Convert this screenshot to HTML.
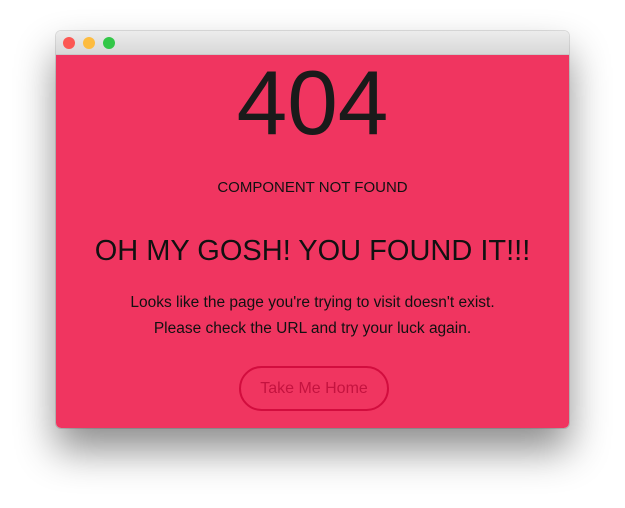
<!DOCTYPE html>
<html><head><style>
body{margin:0;width:625px;height:508px;background:#fff;position:relative;overflow:hidden;font-family:"Liberation Sans",sans-serif}
.win{position:absolute;left:56px;top:31px;width:513px;height:397px;border-radius:5px;overflow:hidden;box-shadow:0 22px 40px rgba(0,0,0,.45),0 0 0 1px rgba(0,0,0,.12)}
.bar{height:23px;background:linear-gradient(#ececec,#d8d8d8);border-bottom:1px solid #c8c8c8;position:relative}
.d{position:absolute;top:6px;width:12px;height:12px;border-radius:50%}
.c{background:#f03560;height:374px;position:relative;text-align:center;color:#111}
.t{position:absolute;left:0;right:0}
</style></head><body>
<div class="win">
<div class="bar"><div class="d" style="left:7px;background:#fc5753"></div><div class="d" style="left:27px;background:#fdbc40"></div><div class="d" style="left:47px;background:#33c748"></div></div>
<div class="c">
<div class="t" style="top:3px;font-size:91px;line-height:91px;color:#1a1a1a">404</div>
<div class="t" style="top:124px;font-size:15px;line-height:18px">COMPONENT NOT FOUND</div>
<div class="t" style="top:179px;font-size:29px;line-height:34px">OH MY GOSH! YOU FOUND IT!!!</div>
<div class="t" style="top:235px;font-size:15.5px;line-height:26px">Looks like the page you're trying to visit doesn't exist.<br>Please check the URL and try your luck again.</div>
<div style="position:absolute;left:183px;top:311px;width:146px;height:41px;border:2px solid #d20d3e;border-radius:23px;color:#c4133f;font-size:16px;line-height:41px">Take Me Home</div>
</div></div>
</body></html>
